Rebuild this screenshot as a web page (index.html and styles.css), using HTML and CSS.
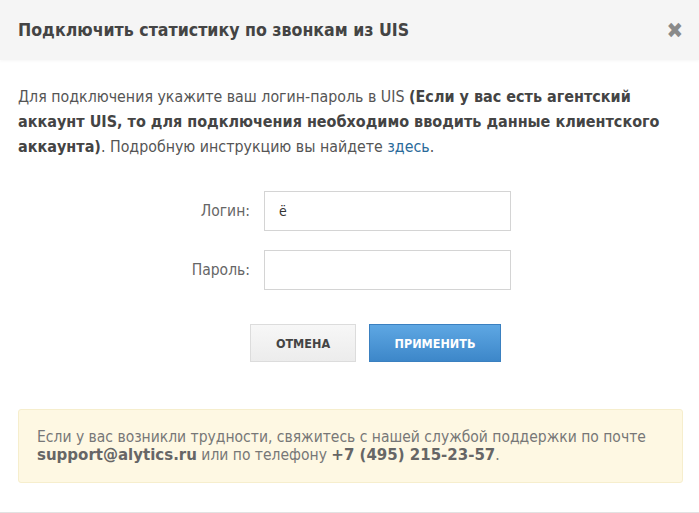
FILE: index.html
```html
<!DOCTYPE html>
<html lang="ru">
<head>
  <meta charset="UTF-8">
  <title>Подключить статистику по звонкам из UIS</title>
  <link rel="stylesheet" href="styles.css">
</head>
<body>
  <div class="modal">
    <div class="modal-header">
      <h3>Подключить статистику по звонкам из UIS</h3>
      <span class="close">&#x2716;</span>
    </div>
    <div class="modal-body">
      <p class="intro">Для подключения укажите ваш логин-пароль в UIS <b>(Если у вас есть агентский аккаунт UIS, то для подключения необходимо вводить данные клиентского аккаунта)</b>. Подробную инструкцию вы найдете <a href="#">здесь</a>.</p>

      <div class="form">
        <div class="row">
          <label>Логин:</label>
          <input type="text" value="ё">
        </div>
        <div class="row">
          <label>Пароль:</label>
          <input type="password">
        </div>
        <div class="buttons">
          <button class="btn">Отмена</button>
          <button class="btn btn-primary">Применить</button>
        </div>
      </div>

      <div class="notice">
        Если у вас возникли трудности, свяжитесь с нашей службой поддержки по почте
        <b>support@alytics.ru</b> или по телефону <b>+7 (495) 215-23-57</b>.
      </div>
    </div>
  </div>
</body>
</html>
```

FILE: styles.css
```css
body {
  margin: 0;
  background: #fff;
  font-family: "DejaVu Sans Condensed", "DejaVu Sans", sans-serif;
  color: #555;
}
.modal {
  height: 512px;
  border-bottom: 1px solid #e2e2e2;
}
.modal-header {
  display: flex;
  align-items: center;
  justify-content: space-between;
  height: 60px;
  padding: 0 18px;
  background: #f5f5f5;
  box-shadow: 0 1px 3px rgba(0, 0, 0, 0.04);
}
.modal-header h3 {
  margin: 0;
  font-size: 17.6px;
  font-weight: bold;
  color: #444;
}
.close {
  font-size: 22px;
  color: #8a8a8a;
  margin-right: -2px;
}
.modal-body {
  padding: 24px 16px 0 18px;
}
.intro {
  margin: 0;
  font-size: 15.8px;
  line-height: 25px;
  color: #555;
}
.intro b {
  font-size: 16px;
  color: #444;
}
.intro a {
  color: #2a6a9a;
  text-decoration: none;
}
.form {
  margin-top: 32px;
  padding-left: 140px;
}
.row {
  display: flex;
  align-items: center;
  margin-bottom: 19px;
}
.row label {
  width: 92px;
  margin-right: 14px;
  text-align: right;
  font-size: 15.5px;
  color: #666;
}
.row input {
  width: 247px;
  height: 40px;
  box-sizing: border-box;
  border: 1px solid #d4d4d4;
  padding: 0 14px;
  font-family: "DejaVu Sans Condensed", "DejaVu Sans", sans-serif;
  font-size: 14px;
  color: #333;
  outline: none;
}
.buttons {
  display: flex;
  gap: 13px;
  margin-top: 34px;
  padding-left: 92px;
}
.btn {
  height: 38px;
  width: 106px;
  border: 1px solid #dcdcdc;
  background: linear-gradient(#f7f7f7, #ececec);
  font-family: "DejaVu Sans Condensed", "DejaVu Sans", sans-serif;
  font-size: 12.5px;
  font-weight: bold;
  text-transform: uppercase;
  color: #444;
  cursor: pointer;
}
.btn-primary {
  width: 132px;
  border: 1px solid #3a80c0;
  background: linear-gradient(#5ea7e3, #3d87c9);
  color: #fff;
}
.notice {
  margin-top: 47px;
  padding: 18px 18px 18px 18px;
  background: #fef8e3;
  border: 1px solid #f6eecd;
  border-radius: 3px;
  font-size: 15.5px;
  line-height: 18px;
  color: #777;
}
.notice b {
  font-family: "DejaVu Sans", sans-serif;
  font-size: 15px;
  color: #666;
}
```
